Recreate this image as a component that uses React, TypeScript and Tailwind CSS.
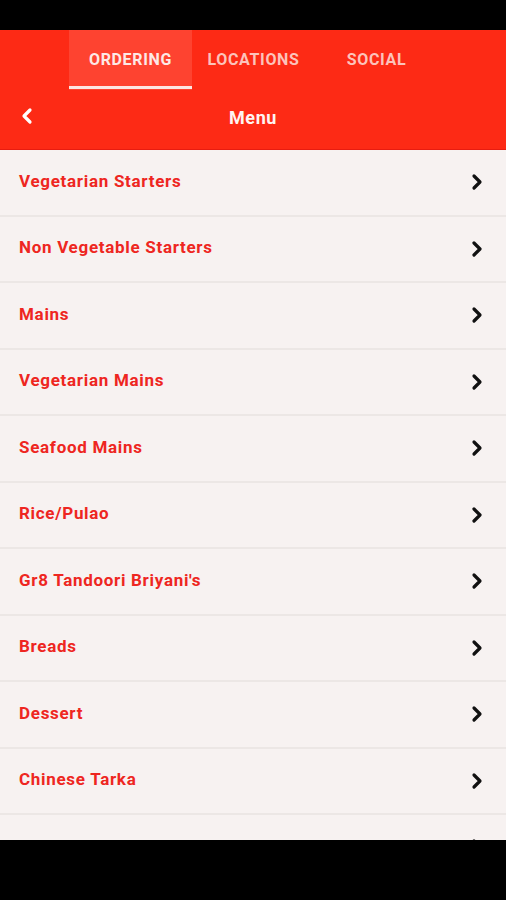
import React from "react";

const items = [
  "Vegetarian Starters",
  "Non Vegetable Starters",
  "Mains",
  "Vegetarian Mains",
  "Seafood Mains",
  "Rice/Pulao",
  "Gr8 Tandoori Briyani's",
  "Breads",
  "Dessert",
  "Chinese Tarka",
  "Extras",
];

function Chevron({ color, dir }: { color: string; dir: "left" | "right" }) {
  return (
    <svg width="14" height="18" viewBox="0 0 14 18" fill="none">
      {dir === "right" ? (
        <polyline points="4,3 10,9 4,15" stroke={color} strokeWidth="3.2" strokeLinecap="round" strokeLinejoin="round" />
      ) : (
        <polyline points="10,3 4,9 10,15" stroke={color} strokeWidth="3.2" strokeLinecap="round" strokeLinejoin="round" />
      )}
    </svg>
  );
}

export default function App() {
  return (
    <div className="w-[506px] h-[900px] flex flex-col bg-black overflow-hidden" style={{ fontFamily: "Roboto, 'Noto Sans', sans-serif" }}>
      <div className="h-[30px] bg-black shrink-0" />
      <div className="bg-[#fd2a15] shrink-0">
        <div className="h-[60px] flex pl-[69px]">
          <div className="w-[123px] relative bg-[#fe4330] flex items-center justify-center">
            <span className="text-[16px] font-bold text-[#fde9e6] tracking-[0.65px]">ORDERING</span>
            <div className="absolute left-0 right-0 bottom-[1px] h-[3px] bg-[#fde7e4]" />
          </div>
          <div className="w-[123px] flex items-center justify-center">
            <span className="text-[16px] font-bold text-[#fcc3bb] tracking-[0.65px]">LOCATIONS</span>
          </div>
          <div className="w-[123px] flex items-center justify-center">
            <span className="text-[16px] font-bold text-[#fcc3bb] tracking-[0.65px]">SOCIAL</span>
          </div>
        </div>
        <div className="h-[60px] relative flex items-center justify-center border-b border-[#e81c10]">
          <div className="absolute left-[20px] top-[17px]">
            <Chevron color="#ffffff" dir="left" />
          </div>
          <span className="text-[18px] font-bold text-[#fff4f2] tracking-[0.6px] -mt-[5px]">Menu</span>
        </div>
      </div>
      <div className="h-[690px] bg-[#f7f2f1] overflow-hidden shrink-0">
        {items.map((it) => (
          <div key={it} className="h-[66.5px] flex items-center justify-between pl-[19px] pr-[22px] border-b-2 border-[#ece7e5]">
            <span className="text-[17px] font-bold text-[#ee2621] tracking-[0.7px] -mt-[2px]">{it}</span>
            <Chevron color="#111111" dir="right" />
          </div>
        ))}
      </div>
      <div className="flex-1 bg-black" />
    </div>
  );
}
